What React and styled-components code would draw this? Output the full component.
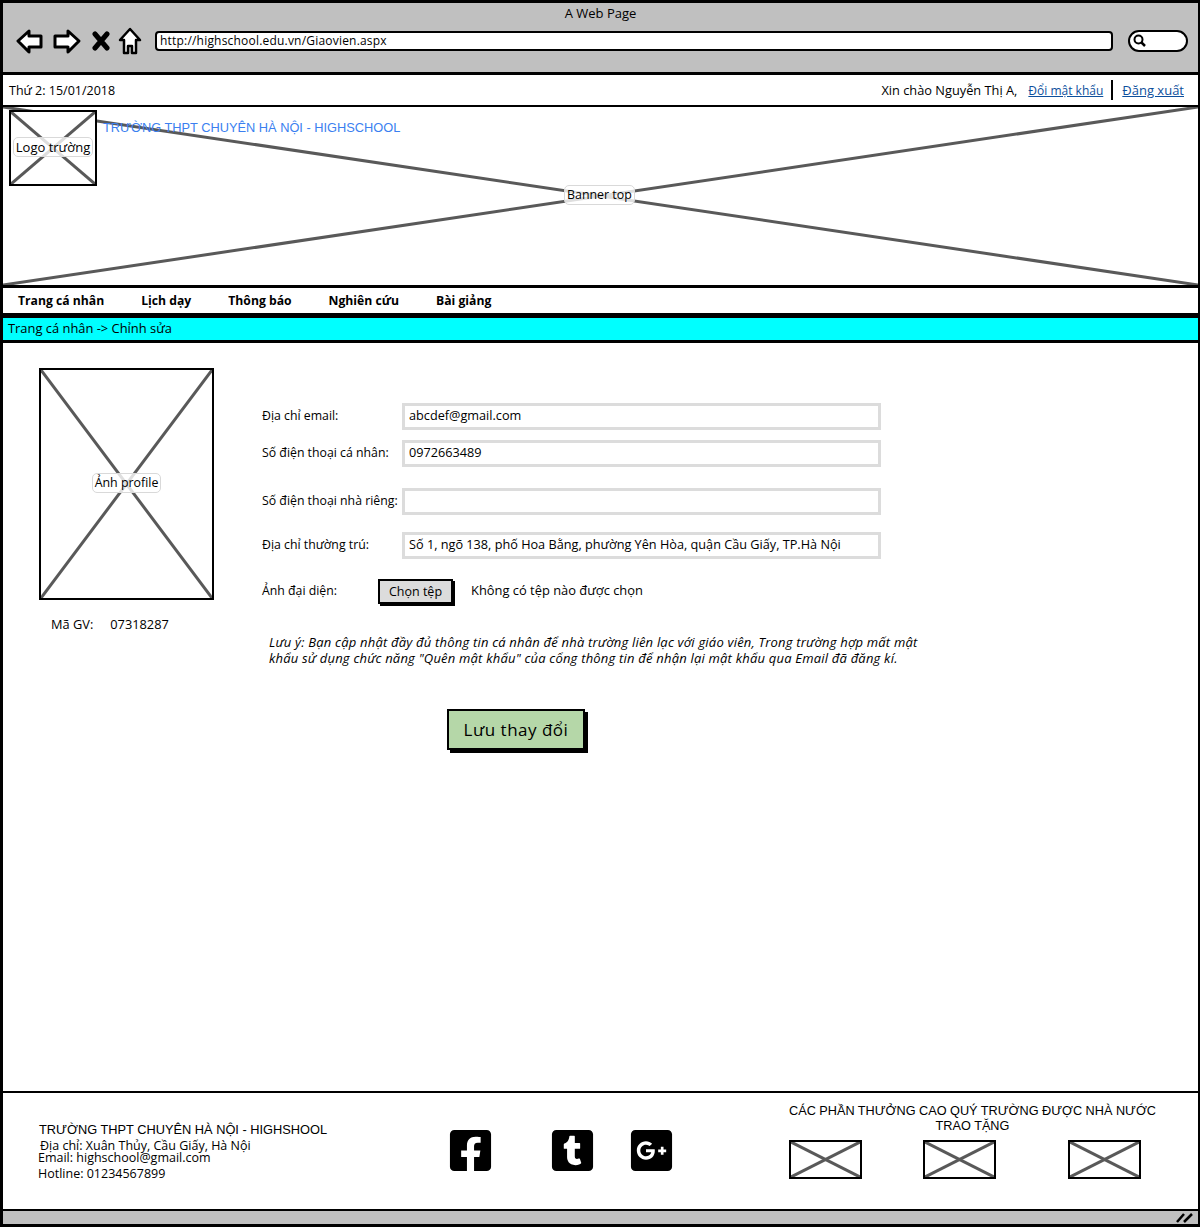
import React from "react";
import styled, { createGlobalStyle } from "styled-components";
import { FaFacebookSquare, FaTumblrSquare, FaGooglePlusSquare } from "react-icons/fa";

const GlobalStyle = createGlobalStyle`
  html, body {
    margin: 0;
    padding: 0;
    background: #fff;
  }
  body {
    font-family: "Open Sans", "Liberation Sans", sans-serif;
    color: #000;
  }
  * {
    box-sizing: border-box;
  }
`;

const Frame = styled.div`
  display: flex;
  flex-direction: column;
  width: 1200px;
  height: 1227px;
  border: 3px solid #000;
  border-right-width: 2px;
`;

/* browser chrome */
const Chrome = styled.div`
  height: 72px;
  flex: none;
  background: #c0c0c0;
  border-bottom: 3px solid #000;
`;
const ChromeTitle = styled.div`
  height: 19px;
  padding-top: 2px;
  text-align: center;
  font-size: 13px;
  line-height: 16px;
`;
const Toolbar = styled.div`
  display: flex;
  align-items: center;
  height: 37px;
  padding-left: 13px;
`;
const NavIcon = styled.svg`
  flex: none;
  margin-right: ${(p) => p.$gap}px;
`;
const UrlBar = styled.div`
  width: 958px;
  height: 20px;
  margin-left: 13px;
  padding-left: 3px;
  background: #fff;
  border: 2px solid #000;
  border-radius: 4px;
  font-size: 12px;
  line-height: 15px;
  letter-spacing: 0.2px;
`;
const SearchBox = styled.div`
  display: flex;
  align-items: center;
  width: 60px;
  height: 22px;
  margin-left: 15px;
  padding-left: 2px;
  background: #fff;
  border: 2px solid #000;
  border-radius: 11px;
`;

/* top info row */
const InfoRow = styled.div`
  display: flex;
  flex: none;
  justify-content: space-between;
  align-items: center;
  height: 32px;
  padding: 0 14px 0 6px;
  border-bottom: 2px solid #000;
  font-size: 12.5px;
`;
const InfoRight = styled.div`
  display: flex;
  align-items: center;
`;
const Greeting = styled.span`
  margin-right: 11px;
  font-size: 12.8px;
`;
const TopLink = styled.a`
  color: #0d4f9c;
  font-size: ${(p) => p.$size}px;
  text-decoration: underline;
`;
const Divider = styled.span`
  width: 2px;
  height: 20px;
  margin: 0 9px 0 8px;
  background: #000;
`;

/* placeholders */
const Placeholder = styled.div`
  position: relative;
  display: flex;
  flex: none;
  align-items: center;
  justify-content: center;
  width: ${(p) => p.$w}px;
  height: ${(p) => p.$h}px;
  background: #fff;
  border: 2px solid #000;
`;
const Cross = styled.svg`
  position: absolute;
  top: 0;
  left: 0;
  width: 100%;
  height: 100%;
  line {
    stroke: #595959;
    stroke-width: 3px;
    vector-effect: non-scaling-stroke;
  }
`;
const PlaceLabel = styled.span`
  position: relative;
  margin-top: -3px;
  padding: 0 2px;
  background: rgba(255, 255, 255, 0.8);
  border: 1px solid #d9d9d9;
  border-radius: 5px;
  font-size: ${(p) => p.$size ?? 12.4}px;
  line-height: 18px;
  white-space: nowrap;
`;

/* banner */
const Banner = styled.div`
  position: relative;
  display: flex;
  flex: none;
  height: 181px;
  padding: 3px 0 0 6px;
  align-items: flex-start;
  border-bottom: 3px solid #000;
`;
const BannerLabel = styled(PlaceLabel)`
  position: absolute;
  left: 561px;
  top: 81px;
`;
const SchoolName = styled.div`
  position: relative;
  margin: 9px 0 0 6px;
  color: #3b7ff0;
  font-family: "Liberation Sans", Arial, sans-serif;
  font-size: 12.8px;
  line-height: 18px;
`;

/* menu */
const Menu = styled.div`
  display: flex;
  flex: none;
  gap: 37px;
  align-items: center;
  height: 28px;
  padding: 0 0 1px 15px;
  border-bottom: 3px solid #000;
  font-size: 12.2px;
  font-weight: 700;
`;
const Crumb = styled.div`
  flex: none;
  height: 27px;
  padding-left: 5px;
  background: #00ffff;
  border-top: 2px solid #000;
  border-bottom: 3px solid #000;
  font-size: 12.9px;
  line-height: 21px;
`;

/* main area */
const Main = styled.div`
  display: flex;
  flex: 1;
  min-height: 0;
  padding: 25px 0 0 36px;
`;
const ProfileCol = styled.div`
  flex: none;
  width: 175px;
`;
const TeacherCode = styled.div`
  display: flex;
  gap: 17px;
  margin-top: 14px;
  padding-left: 12px;
  font-size: 12.8px;
  line-height: 20px;
`;
const FormCol = styled.div`
  flex: none;
  width: 700px;
  margin-left: 48px;
  padding-top: 35px;
`;
const Row = styled.div`
  display: flex;
  align-items: center;
  height: 27px;
  margin-top: ${(p) => p.$top ?? 0}px;
`;
const Label = styled.div`
  flex: none;
  width: 140px;
  margin-top: -2px;
  font-size: 12.3px;
  white-space: nowrap;
`;
const Field = styled.div`
  width: 479px;
  height: 27px;
  padding-left: 4px;
  background: #fff;
  border: 3px solid #dcdcdc;
  font-size: 12.7px;
  line-height: 18px;
`;
const FileLabel = styled(Label)`
  width: 116px;
`;
const FileButton = styled.div`
  width: 75px;
  height: 25px;
  background: #dcdcdc;
  border: 2px solid #000;
  box-shadow: 2px 2px 0 #000;
  font-size: 12.5px;
  line-height: 22px;
  text-align: center;
`;
const FileHint = styled.div`
  margin: -3px 0 0 18px;
  font-size: 12.9px;
`;
const Note = styled.p`
  width: 700px;
  margin: 29px 0 0 7px;
  font-size: 13px;
  font-style: italic;
  line-height: 16px;
  letter-spacing: 0.2px;
  white-space: nowrap;
`;
const SaveButton = styled.div`
  width: 138px;
  height: 41px;
  margin: 43px 0 0 185px;
  background: #b5d7a8;
  border: 2px solid #000;
  box-shadow: 3px 3px 0 #000;
  font-size: 17px;
  line-height: 38px;
  letter-spacing: 0.5px;
  text-align: center;
`;

/* footer */
const Footer = styled.div`
  display: flex;
  flex: none;
  height: 120px;
  padding-left: 36px;
  border-top: 2px solid #000;
  border-bottom: 2px solid #000;
`;
const Contact = styled.div`
  flex: none;
  width: 408px;
  padding-top: 28px;
  font-size: 12.5px;
`;
const ContactTitle = styled.div`
  margin-bottom: 1px;
  font-family: "Liberation Sans", Arial, sans-serif;
  font-size: 12.8px;
  line-height: 18px;
`;
const ContactLine = styled.div`
  height: ${(p) => p.$h}px;
  line-height: ${(p) => p.$h}px;
  padding-left: ${(p) => p.$indent ?? 0}px;
  margin-left: -1px;
`;
const Socials = styled.div`
  display: flex;
  flex: none;
  align-items: flex-start;
  width: 342px;
  padding-top: 34px;
`;
const SocialIcon = styled.span`
  display: flex;
  margin-right: ${(p) => p.$gap}px;
  svg {
    display: block;
  }
`;
const Awards = styled.div`
  flex: none;
  width: 367px;
  padding-top: 11px;
`;
const AwardsTitle = styled.div`
  font-family: "Liberation Sans", Arial, sans-serif;
  font-size: 12.7px;
  line-height: 15px;
  text-align: center;
  white-space: nowrap;
`;
const AwardsRow = styled.div`
  display: flex;
  margin-top: 6px;
`;
const AwardSlot = styled.div`
  margin-right: ${(p) => p.$gap}px;
`;

const StatusBar = styled.div`
  position: relative;
  flex: none;
  height: 13px;
  background: #c0c0c0;
`;
const Grip = styled.svg`
  position: absolute;
  right: 4px;
  top: 1px;
`;

const XMark = () => (
  <Cross viewBox="0 0 100 100" preserveAspectRatio="none">
    <line x1="0" y1="0" x2="100" y2="100" />
    <line x1="100" y1="0" x2="0" y2="100" />
  </Cross>
);

const ImageBox = ({ w, h, label, labelSize }) => (
  <Placeholder $w={w} $h={h}>
    <XMark />
    {label && <PlaceLabel $size={labelSize}>{label}</PlaceLabel>}
  </Placeholder>
);

const App = () => {
  return (
    <>
      <GlobalStyle />
      <Frame>
        <Chrome>
          <ChromeTitle>A Web Page</ChromeTitle>
          <Toolbar>
            <NavIcon width="28" height="26" viewBox="0 0 28 26" $gap={8}>
              <path d="M2 13 L13 3 V8 H25 V19 H13 V24 Z" fill="#fff" stroke="#000" strokeWidth="3" strokeLinejoin="round" />
            </NavIcon>
            <NavIcon width="30" height="26" viewBox="0 0 30 26" $gap={10}>
              <path d="M27 13 L16 3 V8 H3 V19 H16 V24 Z" fill="#fff" stroke="#000" strokeWidth="3" strokeLinejoin="round" />
            </NavIcon>
            <NavIcon width="18" height="20" viewBox="0 0 18 20" $gap={8}>
              <path d="M3 3 L15 17 M15 3 L3 17" stroke="#000" strokeWidth="5" strokeLinecap="round" />
            </NavIcon>
            <NavIcon width="24" height="28" viewBox="0 0 24 28" $gap={0}>
              <path d="M12 2 L22 13 H18 V26 H14 V19 H10 V26 H6 V13 H2 Z" fill="#fff" stroke="#000" strokeWidth="2.5" strokeLinejoin="round" />
            </NavIcon>
            <UrlBar>http://highschool.edu.vn/Giaovien.aspx</UrlBar>
            <SearchBox>
              <svg width="15" height="15" viewBox="0 0 15 15">
                <circle cx="6.5" cy="6.5" r="4" fill="none" stroke="#000" strokeWidth="2" />
                <path d="M9.5 9.5 L13 13" stroke="#000" strokeWidth="2.5" />
              </svg>
            </SearchBox>
          </Toolbar>
        </Chrome>

        <InfoRow>
          <span>Thứ 2: 15/01/2018</span>
          <InfoRight>
            <Greeting>Xin chào Nguyễn Thị A,</Greeting>
            <TopLink $size={12}>Đổi mật khẩu</TopLink>
            <Divider />
            <TopLink $size={13}>Đăng xuất</TopLink>
          </InfoRight>
        </InfoRow>

        <Banner>
          <XMark />
          <ImageBox w={88} h={76} label="Logo trường" labelSize={13} />
          <SchoolName>TRƯỜNG THPT CHUYÊN HÀ NỘI - HIGHSCHOOL</SchoolName>
          <BannerLabel>Banner top</BannerLabel>
        </Banner>

        <Menu>
          <span>Trang cá nhân</span>
          <span>Lịch dạy</span>
          <span>Thông báo</span>
          <span>Nghiên cứu</span>
          <span>Bài giảng</span>
        </Menu>
        <Crumb>Trang cá nhân -&gt; Chỉnh sửa</Crumb>

        <Main>
          <ProfileCol>
            <ImageBox w={175} h={232} label="Ảnh profile" />
            <TeacherCode>
              <span>Mã GV:</span>
              <span>07318287</span>
            </TeacherCode>
          </ProfileCol>
          <FormCol>
            <Row>
              <Label>Địa chỉ email:</Label>
              <Field>abcdef@gmail.com</Field>
            </Row>
            <Row $top={10}>
              <Label>Số điện thoại cá nhân:</Label>
              <Field>0972663489</Field>
            </Row>
            <Row $top={21}>
              <Label>Số điện thoại nhà riêng:</Label>
              <Field />
            </Row>
            <Row $top={17}>
              <Label>Địa chỉ thường trú:</Label>
              <Field>Số 1, ngõ 138, phố Hoa Bằng, phường Yên Hòa, quận Cầu Giấy, TP.Hà Nội</Field>
            </Row>
            <Row $top={19}>
              <FileLabel>Ảnh đại diện:</FileLabel>
              <FileButton>Chọn tệp</FileButton>
              <FileHint>Không có tệp nào được chọn</FileHint>
            </Row>
            <Note>
              Lưu ý: Bạn cập nhật đầy đủ thông tin cá nhân để nhà trường liên lạc với giáo viên, Trong trường hợp mất mật
              <br />
              khẩu sử dụng chức năng "Quên mật khẩu" của cổng thông tin để nhận lại mật khẩu qua Email đã đăng kí.
            </Note>
            <SaveButton>Lưu thay đổi</SaveButton>
          </FormCol>
        </Main>

        <Footer>
          <Contact>
            <ContactTitle>TRƯỜNG THPT CHUYÊN HÀ NỘI - HIGHSHOOL</ContactTitle>
            <ContactLine $h={12} $indent={2}>Địa chỉ: Xuân Thủy, Cầu Giấy, Hà Nội</ContactLine>
            <ContactLine $h={12}>Email: highschool@gmail.com</ContactLine>
            <ContactLine $h={20}>Hotline: 01234567899</ContactLine>
          </Contact>
          <Socials>
            <SocialIcon $gap={55}><FaFacebookSquare size={47} /></SocialIcon>
            <SocialIcon $gap={32}><FaTumblrSquare size={47} /></SocialIcon>
            <SocialIcon $gap={0}><FaGooglePlusSquare size={47} /></SocialIcon>
          </Socials>
          <Awards>
            <AwardsTitle>
              CÁC PHẦN THƯỞNG CAO QUÝ TRƯỜNG ĐƯỢC NHÀ NƯỚC
              <br />
              TRAO TẶNG
            </AwardsTitle>
            <AwardsRow>
              <AwardSlot $gap={61}><ImageBox w={73} h={39} /></AwardSlot>
              <AwardSlot $gap={72}><ImageBox w={73} h={39} /></AwardSlot>
              <AwardSlot $gap={0}><ImageBox w={73} h={39} /></AwardSlot>
            </AwardsRow>
          </Awards>
        </Footer>
        <StatusBar>
          <Grip width="18" height="11" viewBox="0 0 18 11">
            <path d="M1 10 L8 2 M8 10 L16 2" stroke="#000" strokeWidth="2.5" />
          </Grip>
        </StatusBar>
      </Frame>
    </>
  );
};

export default App;
